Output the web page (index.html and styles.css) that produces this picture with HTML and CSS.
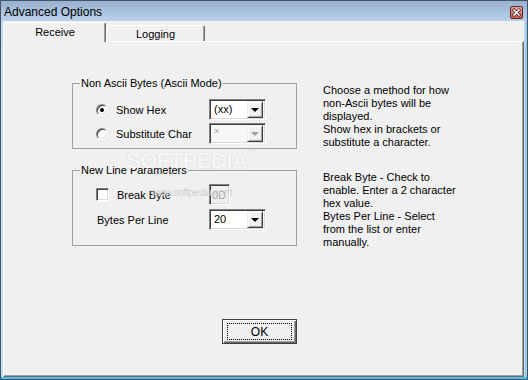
FILE: index.html
```html
<!DOCTYPE html>
<html>
<head>
<meta charset="utf-8">
<link rel="stylesheet" href="styles.css">
</head>
<body>
<div class="window">
  <div class="titlebar">
    <span class="title">Advanced Options</span>
    <span class="close">
      <svg width="13" height="13" viewBox="0 0 13 13">
        <defs>
          <linearGradient id="cg" x1="0" y1="0" x2="0" y2="1">
            <stop offset="0" stop-color="#e7a89c"/>
            <stop offset="1" stop-color="#c7574a"/>
          </linearGradient>
        </defs>
        <rect x="0.5" y="0.5" width="12" height="12" rx="1.5" fill="url(#cg)" stroke="#5e2626"/>
        <path d="M4 4 L9 9 M9 4 L4 9" stroke="#3a1a1a" stroke-width="3" stroke-linecap="square"/>
        <path d="M4 4 L9 9 M9 4 L4 9" stroke="#ffffff" stroke-width="1.6" stroke-linecap="square"/>
      </svg>
    </span>
  </div>
  <div class="client">
    <div class="tabs">
      <div class="tab active">Receive</div>
      <div class="tab">Logging</div>
    </div>
    <div class="panel">
      <div class="grid">
        <fieldset class="group g1">
          <legend>Non Ascii Bytes (Ascii Mode)</legend>
          <div class="row">
            <span class="radio checked"></span>
            <span class="label">Show Hex</span>
            <div class="combo"><span class="value">(xx)</span><span class="drop"><i class="arrow"></i></span></div>
          </div>
          <div class="row">
            <span class="radio"></span>
            <span class="label">Substitute Char</span>
            <div class="combo disabled"><span class="value small">×</span><span class="drop"><i class="arrow"></i></span></div>
          </div>
        </fieldset>
        <p class="desc">Choose a method for how<br>non-Ascii bytes will be<br>displayed.<br>Show hex in brackets or<br>substitute a character.</p>
        <fieldset class="group g2">
          <legend>New Line Parameters</legend>
          <div class="row">
            <span class="check"></span>
            <span class="label">Break Byte</span>
            <div class="edit disabled">0D</div>
          </div>
          <div class="row">
            <span class="label plain">Bytes Per Line</span>
            <div class="combo"><span class="value">20</span><span class="drop"><i class="arrow"></i></span></div>
          </div>
        </fieldset>
        <p class="desc">Break Byte - Check to<br>enable. Enter a 2 character<br>hex value.<br>Bytes Per Line - Select<br>from the list or enter<br>manually.</p>
      </div>
      <div class="footer">
        <div class="ok"><span class="focus">OK</span></div>
      </div>
      <div class="wm">SOFTPEDIA<sup>™</sup></div>
      <div class="wm-url">www.softpedia.com</div>
    </div>
  </div>
</div>
</body>
</html>
```

FILE: styles.css
```css
* { box-sizing: border-box; }
html, body { margin: 0; padding: 0; }
body {
  width: 528px;
  height: 380px;
  overflow: hidden;
  font-family: "Liberation Sans", Arial, sans-serif;
  font-size: 11px;
  color: #000;
}
.window {
  width: 528px;
  height: 380px;
  border: 1px solid #44556a;
  background: #c4daf0;
  box-shadow: inset 0 -2px 0 #4cc3ee, inset -2px 0 0 #9ecdea;
  display: flex;
  flex-direction: column;
}
.titlebar {
  height: 20px;
  flex: none;
  background: linear-gradient(#98b2cf, #b9d1ea);
  display: flex;
  align-items: center;
  padding-left: 3px;
  padding-right: 4px;
}
.title {
  font-size: 12px;
  color: #000;
  flex: 1;
  padding-top: 1px;
}
.close {
  width: 13px;
  height: 13px;
  display: flex;
  margin-top: 2px;
}
.client {
  flex: 1;
  margin: 0 3px 2px 2px;
  background: #f0f0f0;
  padding-top: 1px;
  display: flex;
  flex-direction: column;
}
.tabs {
  display: flex;
  align-items: flex-end;
  height: 19px;
  padding-left: 1px;
  position: relative;
  z-index: 2;
}
.tab {
  height: 16px;
  width: 99px;
  background: #f0f0f0;
  border-top: 1px solid #fff;
  border-left: 1px solid #fff;
  border-right: 1px solid #696969;
  box-shadow: inset -1px 0 0 #a0a0a0;
  border-radius: 2px 2px 0 0;
  display: flex;
  align-items: center;
  justify-content: center;
  font-size: 11px;
}
.tab.active {
  height: 20px;
  width: 102px;
  margin-bottom: -1px;
  padding-bottom: 1px;
}
.panel {
  flex: 1;
  position: relative;
  border-top: 1px solid #fff;
  border-left: 1px solid #fff;
  border-right: 1px solid #696969;
  border-bottom: 1px solid #696969;
  box-shadow: inset -1px -1px 0 #a0a0a0;
  padding: 35px 0 0 68px;
}
.grid {
  display: grid;
  grid-template-columns: 225px auto;
  column-gap: 26px;
  row-gap: 15px;
  align-items: start;
}
.group {
  margin: 0;
  border: 1px solid #a0a0a0;
  padding: 9px 30px 4px 0;
  min-width: 0;
}
.g2 { padding: 7px 30px 15px 0; }
legend {
  margin-left: 7px;
  padding: 0 1px;
  line-height: 13px;
  font-size: 11px;
}
.row {
  height: 21px;
  display: flex;
  align-items: center;
  padding-left: 23px;
}
.g1 .row + .row { margin-top: 3px; }
.g2 .row + .row { margin-top: 4px; }
.radio {
  width: 12px;
  height: 12px;
  border-radius: 50%;
  border: 1px solid;
  border-color: #808080 #fff #fff #808080;
  box-shadow: inset 1px 1px 0 #404040, inset -1px -1px 0 #dcdcdc;
  background: #fff;
  flex: none;
  position: relative;
}
.radio.checked::after {
  content: "";
  position: absolute;
  left: 3px;
  top: 3px;
  width: 4px;
  height: 4px;
  border-radius: 50%;
  background: #000;
}
.check {
  width: 13px;
  height: 13px;
  border: 1px solid;
  border-color: #808080 #fff #fff #808080;
  box-shadow: inset 1px 1px 0 #404040, inset -1px -1px 0 #dcdcdc;
  background: #fff;
  flex: none;
}
.label {
  margin-left: 8px;
  flex: 1;
  white-space: nowrap;
}
.label.plain { margin-left: 1px; }
.combo {
  width: 57px;
  height: 21px;
  flex: none;
  background: #fff;
  border: 1px solid;
  border-color: #808080 #fff #fff #808080;
  box-shadow: inset 1px 1px 0 #404040, inset -1px -1px 0 #dcdcdc;
  display: flex;
  align-items: center;
  padding: 2px 2px 2px 4px;
}
.combo .value {
  flex: 1;
  line-height: 13px;
}
.combo .value.small {
  font-size: 9px;
  color: #a0a0a0;
  align-self: flex-start;
  line-height: 10px;
}
.combo.disabled { background: #f7f7f7; }
.drop {
  width: 16px;
  height: 17px;
  background: #f0f0f0;
  border: 1px solid;
  border-color: #f0f0f0 #404040 #404040 #f0f0f0;
  box-shadow: inset 1px 1px 0 #fff, inset -1px -1px 0 #a0a0a0;
  display: flex;
  align-items: center;
  justify-content: center;
  flex: none;
}
.arrow {
  width: 0;
  height: 0;
  border-left: 4px solid transparent;
  border-right: 4px solid transparent;
  border-top: 4px solid #000;
  margin-top: 1px;
}
.disabled .arrow { border-top-color: #a0a0a0; }
.edit {
  width: 21px;
  height: 21px;
  flex: none;
  margin-right: 36px;
  border: 1px solid;
  border-color: #808080 #fff #fff #808080;
  box-shadow: inset 1px 1px 0 #404040, inset -1px -1px 0 #dcdcdc;
  background: #f0f0f0;
  color: #a0a0a0;
  display: flex;
  align-items: center;
  padding-left: 2px;
}
.desc {
  margin: 7px 0 0 0;
  line-height: 13px;
  white-space: nowrap;
}
.footer {
  margin-top: 70px;
  padding-left: 150px;
}
.ok {
  width: 75px;
  height: 25px;
  border: 1px solid #404040;
  background: #f0f0f0;
  box-shadow: inset 1px 1px 0 #fff, inset -1px -1px 0 #696969, inset -2px -2px 0 #a0a0a0;
  padding: 3px 4px;
  display: flex;
}
.focus {
  flex: 1;
  border: 1px dotted #000;
  display: flex;
  align-items: center;
  justify-content: center;
  font-size: 12px;
}
.wm {
  position: absolute;
  left: 122px;
  top: 106px;
  font-family: "Liberation Sans", Arial, sans-serif;
  font-weight: bold;
  font-size: 22px;
  letter-spacing: -0.5px;
  color: #f6f6f6;
  text-shadow: 0 0 1px #c4c4c4;
  pointer-events: none;
}
.wm sup { font-size: 8px; vertical-align: top; }
.wm-url {
  position: absolute;
  left: 147px;
  top: 145px;
  font-size: 10px;
  color: #cfcfcf;
  letter-spacing: -0.3px;
}
```
